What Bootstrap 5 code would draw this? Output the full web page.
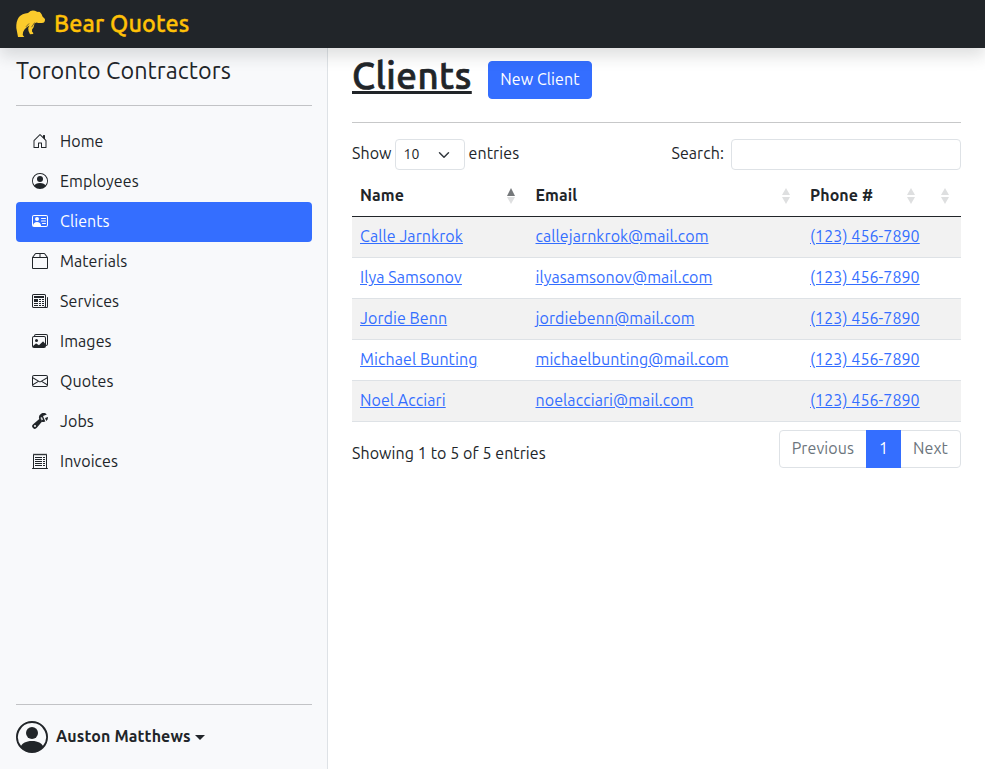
<!DOCTYPE html>
<html lang="en">
<head>
<meta charset="utf-8">
<meta name="viewport" content="width=device-width, initial-scale=1">
<title>Clients - Bear Quotes</title>
<link href="https://cdn.jsdelivr.net/npm/bootstrap@5.3.0/dist/css/bootstrap.min.css" rel="stylesheet">
<style>
  :root { --brand-blue: #346eff; }
  body { font-family: Ubuntu, "Noto Sans", sans-serif; font-size: 16px; letter-spacing: .08px; height: 100vh; overflow: hidden; }
  a { color: var(--brand-blue); }
  hr { color: #212529; }
  .topbar { height: 48px; z-index: 5; }
  .brand-name { font-weight: 500; line-height: 28px; margin-bottom: 3px; letter-spacing: .17px; -webkit-text-stroke: .35px currentColor; }
  .side { width: 328px; background: #f8f9fb; padding: 0 15px 16px 16px; }
  .org-name { line-height: 30px; margin-top: 7px; }
  .org-rule { margin: 20px 0 16px; }
  .side .nav-link { color: #212529; height: 40px; --bs-nav-pills-link-active-bg: var(--brand-blue); --bs-nav-pills-border-radius: 4px; }
  .side .nav-link.active { color: #fff; }
  .nav-link span, .user-name { padding-bottom: 2px; }
  .nav-link svg { margin-bottom: 2px; }
  .user-name { letter-spacing: .12px; }
  .side .dropdown-toggle::after { border-width: 5px 5px 0; margin-left: 4px; }
  .title-row { height: 74px; }
  .page-title { font-weight: 500; line-height: 48px; letter-spacing: .5px; -webkit-text-stroke: .7px currentColor; text-decoration-thickness: 3px; }
  .btn-new { --bs-btn-bg: var(--brand-blue); --bs-btn-border-color: var(--brand-blue); --bs-btn-border-radius: 4px; height: 38px; margin-top: 13px; padding: 5px 11.500px 7px; }
  .len-select { width: 70px; height: 31px; border-radius: 4px; margin-left: -1px; }
  .find-input { width: 230px; height: 31px; border-radius: 4px; margin-left: -1px; }
  .lift { padding-bottom: 3px; }
  .clients-table { table-layout: fixed; margin: 6px 0 8px; --bs-table-striped-bg: #f2f2f2; white-space: nowrap; }
  .clients-table td { padding: 7px 8px 9px; }
  .clients-table thead th { border-bottom-color: #212529; }
  .th-text { line-height: 22px; padding-bottom: 2px; }
  .sorter { width: 8px; height: 18px; margin-right: 4.500px; fill: #dedfe0; }
  .sorter .on { fill: #75787b; }
  .info-text { padding-top: 11px; }
  .pagination { --bs-pagination-border-radius: 4px; --bs-pagination-disabled-bg: #fff; --bs-pagination-disabled-color: #6c757d; --bs-pagination-active-bg: var(--brand-blue); --bs-pagination-active-border-color: var(--brand-blue); }
  .pagination .page-link { padding: 5px 12px 7px; }
</style>
</head>
<body class="d-flex flex-column">
<header class="topbar bg-dark shadow d-flex align-items-center px-3 position-relative flex-shrink-0">
  <svg width="30" height="28" viewBox="0 0 30 28" fill="#fbcb2c"><path d="M2 27 L0.300 18 Q0 11 3 7 Q6 3.500 12 3 L14.500 1 Q16.500 0 19 .800 Q20.500 1.800 22 2 Q23.500 1.500 24.500 2.800 Q26 4.500 26.500 6.500 L29 9 Q29.200 11.500 28 12.500 Q24 13.500 20.500 12.500 L18.500 13.500 Q18 16 17.500 17.500 Q15.500 19 16 21.500 Q17.500 22.500 17.300 24 L14 24.300 Q12 21.500 12.200 18 L13.500 15.500 Q10.500 17 8.500 19.500 Q6.500 22 6.700 25 L8.300 27 Z"/><path d="M18.700 12.500L15.500 17.200M13 13.500L10 16.800" fill="none" stroke="#212529" stroke-width=".6"/></svg>
  <span class="brand-name fs-4 text-warning ms-2">Bear Quotes</span>
</header>
<div class="d-flex flex-grow-1">
  <aside class="side border-end d-flex flex-column flex-shrink-0">
    <div class="org-name fs-4">Toronto Contractors</div>
    <hr class="org-rule">
    <ul class="nav nav-pills flex-column mb-auto">
      <li><a class="nav-link d-flex align-items-center" href="#"><svg width="16" height="16" viewBox="0 0 16 16" fill="currentColor" class="me-2 flex-shrink-0"><path d="M8.354 1.146a.5.5 0 0 0-.708 0l-6 6A.5.5 0 0 0 1.500 7.500v7a.5.5 0 0 0 .5.5h4.500a.5.5 0 0 0 .5-.5v-4h2v4a.5.5 0 0 0 .5.5H14a.5.5 0 0 0 .5-.5v-7a.5.5 0 0 0-.146-.354L13 5.793V2.500a.5.5 0 0 0-.5-.5h-1a.5.5 0 0 0-.5.5v1.293L8.354 1.146zM2.500 14V7.707l5.500-5.500 5.500 5.500V14H10v-4a.5.5 0 0 0-.5-.5h-3a.5.5 0 0 0-.5.5v4H2.500z"/></svg><span class="ms-1">Home</span></a></li>
      <li><a class="nav-link d-flex align-items-center" href="#"><svg width="16" height="16" viewBox="0 0 16 16" fill="currentColor" class="me-2 flex-shrink-0"><path d="M11 6a3 3 0 1 1-6 0 3 3 0 0 1 6 0z"/><path fill-rule="evenodd" d="M0 8a8 8 0 1 1 16 0A8 8 0 0 1 0 8zm8-7a7 7 0 0 0-5.468 11.370C3.242 11.226 4.805 10 8 10s4.757 1.225 5.468 2.370A7 7 0 0 0 8 1z"/></svg><span class="ms-1">Employees</span></a></li>
      <li><a class="nav-link active d-flex align-items-center" href="#"><svg width="16" height="16" viewBox="0 0 16 16" fill="currentColor" class="me-2 flex-shrink-0"><path d="M5 8a2 2 0 1 0 0-4 2 2 0 0 0 0 4Zm4-2.500a.5.5 0 0 1 .5-.5h4a.5.5 0 0 1 0 1h-4a.5.5 0 0 1-.5-.5ZM9 8a.5.5 0 0 1 .5-.5h4a.5.5 0 0 1 0 1h-4A.5.5 0 0 1 9 8Zm1 2.500a.5.5 0 0 1 .5-.5h3a.5.5 0 0 1 0 1h-3a.5.5 0 0 1-.5-.5Z"/><path d="M2 2a2 2 0 0 0-2 2v8a2 2 0 0 0 2 2h12a2 2 0 0 0 2-2V4a2 2 0 0 0-2-2H2ZM1 4a1 1 0 0 1 1-1h12a1 1 0 0 1 1 1v8a1 1 0 0 1-1 1H8.960c.026-.163.040-.330.040-.5C9 10.567 7.210 9 5 9c-2.086 0-3.800 1.398-3.984 3.181A1.006 1.006 0 0 1 1 12V4Z"/></svg><span class="ms-1">Clients</span></a></li>
      <li><a class="nav-link d-flex align-items-center" href="#"><svg width="16" height="16" viewBox="0 0 16 16" fill="currentColor" class="me-2 flex-shrink-0"><path d="M2.950.4a1 1 0 0 1 .8-.4h8.500a1 1 0 0 1 .8.4l2.850 3.800a.5.5 0 0 1 .1.3V15a1 1 0 0 1-1 1H1a1 1 0 0 1-1-1V4.500a.5.5 0 0 1 .1-.3L2.950.4ZM7.500 1H3.750L1.500 4h6V1Zm1 0v3h6l-2.250-3H8.500ZM15 5H1v10h14V5Z"/></svg><span class="ms-1">Materials</span></a></li>
      <li><a class="nav-link d-flex align-items-center" href="#"><svg width="16" height="16" viewBox="0 0 16 16" fill="currentColor" class="me-2 flex-shrink-0"><path d="M0 2.500A1.500 1.500 0 0 1 1.500 1h11A1.500 1.500 0 0 1 14 2.500v10.528c0 .3-.050.654-.238.972h.738a.5.5 0 0 0 .5-.5v-9a.5.5 0 0 1 1 0v9a1.500 1.500 0 0 1-1.500 1.500H1.497A1.497 1.497 0 0 1 0 13.500v-11zM12 14c.370 0 .654-.211.853-.441.092-.106.147-.279.147-.531V2.500a.5.5 0 0 0-.5-.5h-11a.5.5 0 0 0-.5.5v11c0 .278.223.5.497.5H12z"/><path d="M2 3h10v2H2V3zm0 3h4v3H2V6zm0 4h4v1H2v-1zm0 2h4v1H2v-1zm5-6h2v1H7V6zm3 0h2v1h-2V6zM7 8h2v1H7V8zm3 0h2v1h-2V8zm-3 2h2v1H7v-1zm3 0h2v1h-2v-1zm-3 2h2v1H7v-1zm3 0h2v1h-2v-1z"/></svg><span class="ms-1">Services</span></a></li>
      <li><a class="nav-link d-flex align-items-center" href="#"><svg width="16" height="16" viewBox="0 0 16 16" fill="currentColor" class="me-2 flex-shrink-0"><path d="M4.502 9a1.500 1.500 0 1 0 0-3 1.500 1.500 0 0 0 0 3z"/><path d="M14.002 13a2 2 0 0 1-2 2h-10a2 2 0 0 1-2-2V5A2 2 0 0 1 2 3a2 2 0 0 1 2-2h10a2 2 0 0 1 2 2v8a2 2 0 0 1-1.998 2zM14 2H4a1 1 0 0 0-1 1h9.002a2 2 0 0 1 2 2v7A1 1 0 0 0 15 11V3a1 1 0 0 0-1-1zM2.002 4a1 1 0 0 0-1 1v8l2.646-2.354a.5.5 0 0 1 .630-.062l2.660 1.773 3.710-3.710a.5.5 0 0 1 .577-.094l1.777 1.947V5a1 1 0 0 0-1-1h-10z"/></svg><span class="ms-1">Images</span></a></li>
      <li><a class="nav-link d-flex align-items-center" href="#"><svg width="16" height="16" viewBox="0 0 16 16" fill="currentColor" class="me-2 flex-shrink-0"><path d="M0 4a2 2 0 0 1 2-2h12a2 2 0 0 1 2 2v8a2 2 0 0 1-2 2H2a2 2 0 0 1-2-2V4Zm2-1a1 1 0 0 0-1 1v.217l7 4.200 7-4.200V4a1 1 0 0 0-1-1H2Zm13 2.383-4.708 2.825L15 11.105V5.383Zm-.034 6.876-5.640-3.471L8 9.583l-1.326-.795-5.640 3.470A1 1 0 0 0 2 13h12a1 1 0 0 0 .966-.741ZM1 11.105l4.708-2.897L1 5.383v5.722Z"/></svg><span class="ms-1">Quotes</span></a></li>
      <li><a class="nav-link d-flex align-items-center" href="#"><svg width="16" height="16" viewBox="0 0 16 16" fill="currentColor" class="me-2 flex-shrink-0"><path d="M16 4.500a4.492 4.492 0 0 1-1.703 3.526L13 5l2.959-1.110c.027.2.041.403.041.610Z"/><path d="M11.500 9c.653 0 1.273-.139 1.833-.390L12 5.500 11 3l3.826-1.530A4.500 4.500 0 0 0 7.290 6.092l-6.116 5.096a2.583 2.583 0 1 0 3.638 3.638L9.908 8.710A4.490 4.490 0 0 0 11.500 9Zm-1.292-4.361-.596.893.809-.270a.250.250 0 0 1 .287.377l-.596.893.809-.270.158.475-1.500.5a.250.250 0 0 1-.287-.376l.596-.893-.809.270a.250.250 0 0 1-.287-.377l.596-.893-.809.270-.158-.475 1.500-.5a.250.250 0 0 1 .287.376ZM3 14a1 1 0 1 1 0-2 1 1 0 0 1 0 2Z"/></svg><span class="ms-1">Jobs</span></a></li>
      <li><a class="nav-link d-flex align-items-center" href="#"><svg width="16" height="16" viewBox="0 0 16 16" fill="currentColor" class="me-2 flex-shrink-0"><path d="M3 4h7v1H3zM3 6h7v1H3zM3 8h7v1H3zM3 10h7v1H3zM3 12h7v1H3zM11 4h2v1h-2zM11 6h2v1h-2zM11 8h2v1h-2zM11 10h2v1h-2zM11 12h2v1h-2z"/><path d="M2.354.646a.5.5 0 0 0-.801.130l-.5 1A.5.5 0 0 0 1 2v13H.5a.5.5 0 0 0 0 1h15a.5.5 0 0 0 0-1H15V2a.5.5 0 0 0-.053-.224l-.5-1a.5.5 0 0 0-.8-.130L13 1.293l-.646-.647a.5.5 0 0 0-.708 0L11 1.293l-.646-.647a.5.5 0 0 0-.708 0L9 1.293 8.354.646a.5.5 0 0 0-.708 0L7 1.293 6.354.646a.5.5 0 0 0-.708 0L5 1.293 4.354.646a.5.5 0 0 0-.708 0L3 1.293 2.354.646zm-.217 1.198.51.510a.5.5 0 0 0 .707 0L4 1.707l.646.647a.5.5 0 0 0 .708 0L6 1.707l.646.647a.5.5 0 0 0 .708 0L8 1.707l.646.647a.5.5 0 0 0 .708 0L10 1.707l.646.647a.5.5 0 0 0 .708 0L12 1.707l.646.647a.5.5 0 0 0 .708 0l.509-.510.137.274V15H2V2.118l.137-.274z"/></svg><span class="ms-1">Invoices</span></a></li>
    </ul>
    <hr class="my-3">
    <a href="#" class="d-flex align-items-center text-decoration-none text-dark dropdown-toggle">
      <svg width="32" height="32" viewBox="0 0 16 16" fill="currentColor" class="me-2"><path d="M11 6a3 3 0 1 1-6 0 3 3 0 0 1 6 0z"/><path fill-rule="evenodd" d="M0 8a8 8 0 1 1 16 0A8 8 0 0 1 0 8zm8-7a7 7 0 0 0-5.468 11.370C3.242 11.226 4.805 10 8 10s4.757 1.225 5.468 2.370A7 7 0 0 0 8 1z"/></svg>
      <strong class="user-name">Auston Matthews</strong>
    </a>
  </aside>
  <main class="flex-grow-1 px-4">
    <div class="d-flex align-items-start gap-3 title-row">
      <h1 class="page-title text-decoration-underline mt-1 mb-0">Clients</h1>
      <a href="#" class="btn btn-primary btn-new">New Client</a>
    </div>
    <hr class="mb-3 mt-0">
    <div class="d-flex justify-content-between">
      <label class="d-flex align-items-center gap-1"><span class="lift">Show</span>
        <select class="form-select form-select-sm len-select"><option>10</option></select> <span class="lift">entries</span></label>
      <label class="d-flex align-items-center gap-2"><span class="lift">Search:</span> <input type="search" class="form-control form-control-sm find-input"></label>
    </div>
    <table class="table table-striped clients-table">
      <colgroup><col style="width:175.500px"><col style="width:274.500px"><col style="width:125px"><col style="width:34px"></colgroup>
      <thead>
        <tr>
          <th><div class="d-flex align-items-center justify-content-between"><span class="th-text">Name</span><svg class="sorter" viewBox="0 0 8 18"><path class="on" d="M4 1L8 9H0z"/><path d="M0 10h8L4 17z"/></svg></div></th>
          <th><div class="d-flex align-items-center justify-content-between"><span class="th-text">Email</span><svg class="sorter" viewBox="0 0 8 18"><path d="M4 1L8 8H0z"/><path d="M0 10h8L4 17z"/></svg></div></th>
          <th><div class="d-flex align-items-center justify-content-between"><span class="th-text">Phone #</span><svg class="sorter" viewBox="0 0 8 18"><path d="M4 1L8 8H0z"/><path d="M0 10h8L4 17z"/></svg></div></th>
          <th><div class="d-flex align-items-center justify-content-end"><span>&nbsp;</span><svg class="sorter" viewBox="0 0 8 18"><path d="M4 1L8 8H0z"/><path d="M0 10h8L4 17z"/></svg></div></th>
        </tr>
      </thead>
      <tbody>
        <tr><td><a href="#">Calle Jarnkrok</a></td><td><a href="#">callejarnkrok@mail.com</a></td><td><a href="#">(123) 456-7890</a></td><td></td></tr>
        <tr><td><a href="#">Ilya Samsonov</a></td><td><a href="#">ilyasamsonov@mail.com</a></td><td><a href="#">(123) 456-7890</a></td><td></td></tr>
        <tr><td><a href="#">Jordie Benn</a></td><td><a href="#">jordiebenn@mail.com</a></td><td><a href="#">(123) 456-7890</a></td><td></td></tr>
        <tr><td><a href="#">Michael Bunting</a></td><td><a href="#">michaelbunting@mail.com</a></td><td><a href="#">(123) 456-7890</a></td><td></td></tr>
        <tr><td><a href="#">Noel Acciari</a></td><td><a href="#">noelacciari@mail.com</a></td><td><a href="#">(123) 456-7890</a></td><td></td></tr>
      </tbody>
    </table>
    <div class="d-flex justify-content-between align-items-start">
      <div class="info-text">Showing 1 to 5 of 5 entries</div>
      <ul class="pagination mb-0">
        <li class="page-item disabled"><a class="page-link" href="#">Previous</a></li>
        <li class="page-item active"><a class="page-link" href="#">1</a></li>
        <li class="page-item disabled"><a class="page-link" href="#">Next</a></li>
      </ul>
    </div>
  </main>
</div>
<script src="https://cdn.jsdelivr.net/npm/bootstrap@5.3.0/dist/js/bootstrap.bundle.min.js"></script>
</body>
</html>
